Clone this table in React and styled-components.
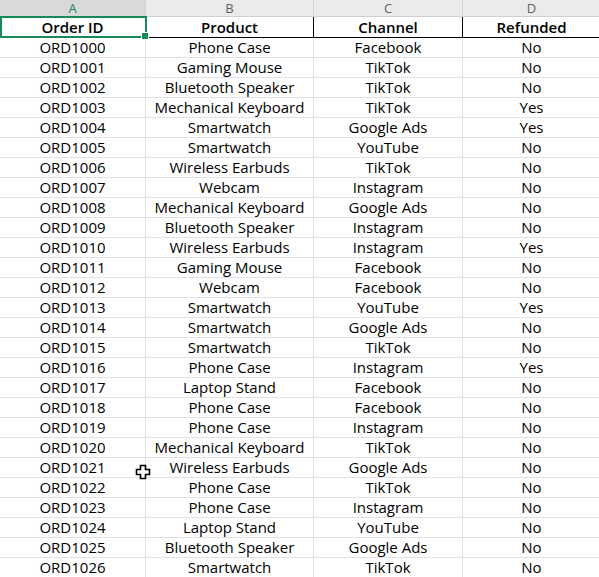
import React from "react";
import styled, { createGlobalStyle } from "styled-components";

const Global = createGlobalStyle`
  html, body { margin: 0; padding: 0; background: #ffffff; overflow: hidden; }
  body { font-family: "Open Sans", "Noto Sans", sans-serif; }
`;

const GREEN = "#168a58";

const rows = [
  ["ORD1000", "Phone Case", "Facebook", "No"],
  ["ORD1001", "Gaming Mouse", "TikTok", "No"],
  ["ORD1002", "Bluetooth Speaker", "TikTok", "No"],
  ["ORD1003", "Mechanical Keyboard", "TikTok", "Yes"],
  ["ORD1004", "Smartwatch", "Google Ads", "Yes"],
  ["ORD1005", "Smartwatch", "YouTube", "No"],
  ["ORD1006", "Wireless Earbuds", "TikTok", "No"],
  ["ORD1007", "Webcam", "Instagram", "No"],
  ["ORD1008", "Mechanical Keyboard", "Google Ads", "No"],
  ["ORD1009", "Bluetooth Speaker", "Instagram", "No"],
  ["ORD1010", "Wireless Earbuds", "Instagram", "Yes"],
  ["ORD1011", "Gaming Mouse", "Facebook", "No"],
  ["ORD1012", "Webcam", "Facebook", "No"],
  ["ORD1013", "Smartwatch", "YouTube", "Yes"],
  ["ORD1014", "Smartwatch", "Google Ads", "No"],
  ["ORD1015", "Smartwatch", "TikTok", "No"],
  ["ORD1016", "Phone Case", "Instagram", "Yes"],
  ["ORD1017", "Laptop Stand", "Facebook", "No"],
  ["ORD1018", "Phone Case", "Facebook", "No"],
  ["ORD1019", "Phone Case", "Instagram", "No"],
  ["ORD1020", "Mechanical Keyboard", "TikTok", "No"],
  ["ORD1021", "Wireless Earbuds", "Google Ads", "No"],
  ["ORD1022", "Phone Case", "TikTok", "No"],
  ["ORD1023", "Phone Case", "Instagram", "No"],
  ["ORD1024", "Laptop Stand", "YouTube", "No"],
  ["ORD1025", "Bluetooth Speaker", "Google Ads", "No"],
  ["ORD1026", "Smartwatch", "TikTok", "No"],
];

const headers = ["Order ID", "Product", "Channel", "Refunded"];
const letters = ["A", "B", "C", "D"];

const Sheet = styled.div`
  position: relative;
  width: 599px;
  height: 577px;
  overflow: hidden;
  display: grid;
  grid-template-columns: 146px 168px 149px 138px;
  grid-auto-rows: 20px;
  grid-template-rows: 17px 21px;
  align-content: start;
`;

const ColHeader = styled.div`
  box-sizing: border-box;
  display: flex;
  align-items: center;
  justify-content: center;
  background: ${(p) => (p.$active ? "#d9d9d9" : "#ebebeb")};
  border-right: 1px solid #d4d4d4;
  border-bottom: 1px solid #d0d0d0;
  color: ${(p) => (p.$active ? GREEN : "#616161")};
  font-size: 13px;
  line-height: 1;
  padding-top: 1px;
`;

const Cell = styled.div`
  box-sizing: border-box;
  display: flex;
  align-items: center;
  justify-content: center;
  white-space: nowrap;
  overflow: hidden;
  color: #000000;
  font-size: 15px;
  line-height: 1;
  border-right: 1px solid ${(p) => (p.$title ? "#000000" : "#e1e1e1")};
  border-bottom: 1px solid ${(p) => (p.$title ? "#000000" : "#e1e1e1")};
  font-weight: ${(p) => (p.$title ? 600 : 400)};
`;

const Selection = styled.div`
  position: absolute;
  left: 0;
  top: 16px;
  width: 147px;
  height: 22px;
  box-sizing: border-box;
  border: 2px solid ${GREEN};
  pointer-events: none;
`;

const Handle = styled.div`
  position: absolute;
  left: 142px;
  top: 33px;
  width: 6px;
  height: 6px;
  background: ${GREEN};
  box-shadow: 0 0 0 1px #ffffff;
`;

const Cursor = styled.svg`
  position: absolute;
  left: 135px;
  top: 464px;
`;

export default function App() {
  return (
    <>
      <Global />
      <Sheet>
        {letters.map((l, i) => (
          <ColHeader key={l} $active={i === 0}>
            {l}
          </ColHeader>
        ))}
        {headers.map((h) => (
          <Cell key={h} $title>
            {h}
          </Cell>
        ))}
        {rows.map((r) =>
          r.map((v, j) => <Cell key={r[0] + j}>{v}</Cell>)
        )}
        <Selection />
        <Handle />
        <Cursor width="16" height="16" viewBox="0 0 16 16">
          <path
            d="M5.5 1.5 H10.5 V5.5 H14.5 V10.5 H10.5 V14.5 H5.5 V10.5 H1.5 V5.5 H5.5 Z"
            fill="#ffffff"
            stroke="#000000"
            strokeWidth="1.6"
            strokeLinejoin="miter"
          />
        </Cursor>
      </Sheet>
    </>
  );
}
